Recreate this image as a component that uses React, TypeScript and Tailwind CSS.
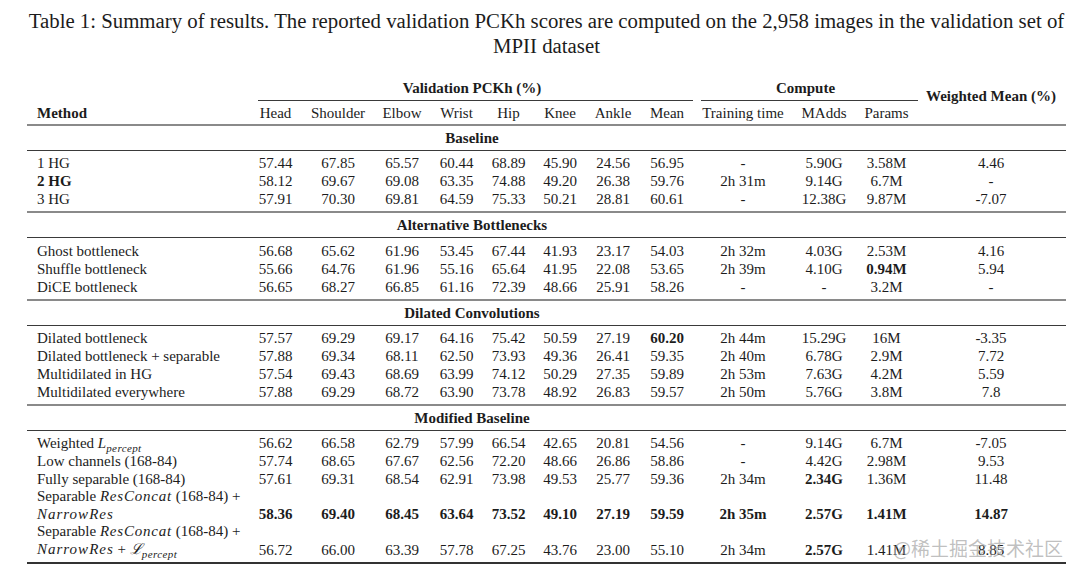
import React from 'react';

type Row = {
    method: React.ReactNode;
    values: string[];
    boldMethod?: boolean;
    tall?: boolean;
};

const gridCols =
    'grid grid-cols-[217px_63px_62px_66px_43px_61px_42px_64px_44px_108px_54px_71px_138px_6px]';

const ResConcat = () => <span className="italic tracking-[0.8px]">ResConcat</span>;
const NarrowRes = () => <span className="italic tracking-[1px]">NarrowRes</span>;
const Percept = () => <span className="relative top-[4px] text-[11px] italic tracking-[0.4px]">percept</span>;

const sections: { title: string; rows: Row[]; padTop: string }[] = [
    {
        title: 'Baseline',
        padTop: 'pt-[3px]',
        rows: [
            { method: '1 HG', values: ['57.44', '67.85', '65.57', '60.44', '68.89', '45.90', '24.56', '56.95', '-', '5.90G', '3.58M', '4.46'] },
            { method: '2 HG', boldMethod: true, values: ['58.12', '69.67', '69.08', '63.35', '74.88', '49.20', '26.38', '59.76', '2h 31m', '9.14G', '6.7M', '-'] },
            { method: '3 HG', values: ['57.91', '70.30', '69.81', '64.59', '75.33', '50.21', '28.81', '60.61', '-', '12.38G', '9.87M', '-7.07'] },
        ],
    },
    {
        title: 'Alternative Bottlenecks',
        padTop: 'pt-[4px]',
        rows: [
            { method: 'Ghost bottleneck', values: ['56.68', '65.62', '61.96', '53.45', '67.44', '41.93', '23.17', '54.03', '2h 32m', '4.03G', '2.53M', '4.16'] },
            { method: 'Shuffle bottleneck', values: ['55.66', '64.76', '61.96', '55.16', '65.64', '41.95', '22.08', '53.65', '2h 39m', '4.10G', '*0.94M', '5.94'] },
            { method: 'DiCE bottleneck', values: ['56.65', '68.27', '66.85', '61.16', '72.39', '48.66', '25.91', '58.26', '-', '-', '3.2M', '-'] },
        ],
    },
    {
        title: 'Dilated Convolutions',
        padTop: 'pt-[3px]',
        rows: [
            { method: 'Dilated bottleneck', values: ['57.57', '69.29', '69.17', '64.16', '75.42', '50.59', '27.19', '*60.20', '2h 44m', '15.29G', '16M', '-3.35'] },
            { method: 'Dilated bottleneck + separable', values: ['57.88', '69.34', '68.11', '62.50', '73.93', '49.36', '26.41', '59.35', '2h 40m', '6.78G', '2.9M', '7.72'] },
            { method: 'Multidilated in HG', values: ['57.54', '69.43', '68.69', '63.99', '74.12', '50.29', '27.35', '59.89', '2h 53m', '7.63G', '4.2M', '5.59'] },
            { method: 'Multidilated everywhere', values: ['57.88', '69.29', '68.72', '63.90', '73.78', '48.92', '26.83', '59.57', '2h 50m', '5.76G', '3.8M', '7.8'] },
        ],
    },
    {
        title: 'Modified Baseline',
        padTop: 'pt-[3px]',
        rows: [
            {
                method: (
                    <>
                        Weighted <span className="italic">L</span>
                        <Percept />
                    </>
                ),
                values: ['56.62', '66.58', '62.79', '57.99', '66.54', '42.65', '20.81', '54.56', '-', '9.14G', '6.7M', '-7.05'],
            },
            { method: 'Low channels (168-84)', values: ['57.74', '68.65', '67.67', '62.56', '72.20', '48.66', '26.86', '58.86', '-', '4.42G', '2.98M', '9.53'] },
            { method: 'Fully separable (168-84)', values: ['57.61', '69.31', '68.54', '62.91', '73.98', '49.53', '25.77', '59.36', '2h 34m', '*2.34G', '1.36M', '11.48'] },
            {
                tall: true,
                method: (
                    <>
                        <div>
                            Separable <ResConcat /> (168-84) +
                        </div>
                        <div>
                            <NarrowRes />
                        </div>
                    </>
                ),
                values: ['*58.36', '*69.40', '*68.45', '*63.64', '*73.52', '*49.10', '*27.19', '*59.59', '*2h 35m', '*2.57G', '*1.41M', '*14.87'],
            },
            {
                tall: true,
                method: (
                    <>
                        <div>
                            Separable <ResConcat /> (168-84) +
                        </div>
                        <div>
                            <NarrowRes /> + <span className="italic">ℒ</span>
                            <Percept />
                        </div>
                    </>
                ),
                values: ['56.72', '66.00', '63.39', '57.78', '67.25', '43.76', '23.00', '55.10', '2h 34m', '*2.57G', '1.41M', '8.85'],
            },
        ],
    },
];

const Cell: React.FC<{ value: string }> = ({ value }) => {
    const isBold = value.startsWith('*');
    return (
        <div className={`flex min-w-0 justify-center whitespace-nowrap ${isBold ? 'font-bold' : ''}`}>
            {isBold ? value.slice(1) : value}
        </div>
    );
};

const DataRow: React.FC<{ row: Row }> = ({ row }) => (
    <div className={`${gridCols} ${row.tall ? 'items-end leading-[17.5px]' : 'h-[18px] leading-[18px]'}`}>
        <div className={`min-w-0 whitespace-nowrap pl-[10px] ${row.boldMethod ? 'font-bold' : ''}`}>{row.method}</div>
        {row.values.map((value, i) => (
            <Cell key={i} value={value} />
        ))}
    </div>
);

const ThickRule = () => <div className="h-[2px] bg-[#8a8a8a]" />;
const ThinRule = () => <div className="h-px bg-[#3a3a3a]" />;

export default function App() {
    return (
        <div className="relative h-[574px] w-[1080px] overflow-hidden bg-white font-['Liberation_Serif','DejaVu_Serif',serif] text-[#1c1c1c]">
            <div className="ml-[27px] w-[1039px]">
                <div className="pt-[8px] text-center text-[20.8px] leading-[25px]">
                    <div className="whitespace-nowrap">
                        Table 1: Summary of results. The reported validation PCKh scores are computed on the 2,958 images in the validation set of
                    </div>
                    <div>MPII dataset</div>
                </div>

                <div className="mt-[21px] text-[15px]">
                    <div className={`${gridCols} grid-rows-[22px_23px]`}>
                        <div className="col-span-8 col-start-2 row-start-1 flex flex-col">
                            <div className="h-[18px] pl-[11px] text-center font-bold leading-[18px]">Validation PCKh (%)</div>
                            <div className="mt-[3px] ml-[14px] -mr-[4px] h-px bg-[#3a3a3a]" />
                        </div>
                        <div className="col-span-3 col-start-10 row-start-1 flex flex-col">
                            <div className="h-[18px] text-center font-bold leading-[18px]">Compute</div>
                            <div className="mt-[3px] ml-[12px] mr-[4px] h-px bg-[#3a3a3a]" />
                        </div>
                        <div className="col-start-13 row-span-2 row-start-1 flex min-w-0 items-center justify-center whitespace-nowrap pb-[10px] font-bold">
                            Weighted Mean (%)
                        </div>
                        <div className="col-start-1 row-start-2 pl-[10px] pt-[3px] font-bold leading-[18px]">Method</div>
                        {['Head', 'Shoulder', 'Elbow', 'Wrist', 'Hip', 'Knee', 'Ankle', 'Mean', 'Training time', 'MAdds', 'Params'].map(
                            (label) => (
                                <div key={label} className="row-start-2 flex min-w-0 justify-center whitespace-nowrap pt-[3px] leading-[18px]">
                                    {label}
                                </div>
                            ),
                        )}
                    </div>

                    {sections.map((section) => (
                        <div key={section.title}>
                            <ThickRule />
                            <div className={gridCols}>
                                <div className="col-span-8 col-start-2 h-[24px] whitespace-nowrap pl-[11px] text-center font-bold leading-[24px]">
                                    {section.title}
                                </div>
                            </div>
                            <ThinRule />
                            <div className={`${section.padTop} pb-[3px]`}>
                                {section.rows.map((row, i) => (
                                    <DataRow key={i} row={row} />
                                ))}
                            </div>
                        </div>
                    ))}
                    <div className="h-[2px] bg-[#333]" />
                </div>
            </div>

            <div className="absolute left-[893px] top-[537px] whitespace-nowrap font-['Noto_Sans_CJK_SC','Noto_Sans',sans-serif] text-[19px] leading-[22px] text-[rgba(150,150,150,0.6)]">
                @稀土掘金技术社区
            </div>
        </div>
    );
}
